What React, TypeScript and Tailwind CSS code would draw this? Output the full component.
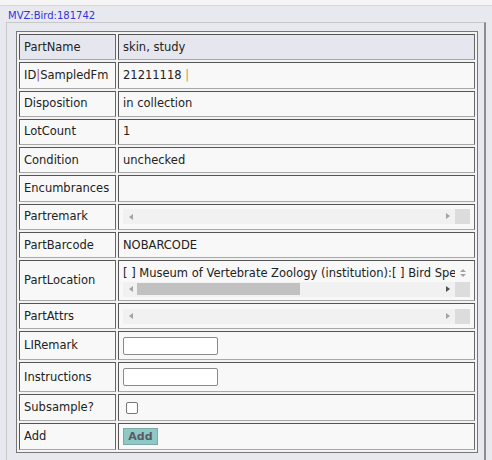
import { ReactNode } from 'react';

// horizontal scrollbar strip with its corner square, as drawn by an empty overflow box
const HScroll = ({ thumb = false }: { thumb?: boolean }) => (
  <div className="flex h-[15px] w-full">
    <div className="relative flex flex-1 items-center bg-[#f1f1f1]">
      <span className="ml-[6px] h-0 w-0 border-y-[3.5px] border-r-[4px] border-y-transparent border-r-[#a3a3a3]" />
      {thumb && <div className="ml-[4px] h-[12px] w-[163px] bg-[#c1c1c1]" />}
      <span
        className={
          'absolute right-[5px] top-[4px] h-0 w-0 border-y-[3.5px] border-l-[4px] border-y-transparent ' +
          (thumb ? 'border-l-[#505050]' : 'border-l-[#a3a3a3]')
        }
      />
    </div>
    <div className="w-[15px] bg-[#dcdcdc]" />
  </div>
);

type Row = { label: ReactNode; value?: ReactNode; h: string; head?: boolean };

const rows: Row[] = [
  { label: 'PartName', value: 'skin, study', h: 'h-[26.3px]', head: true },
  {
    label: (
      <>
        ID<span className="text-[#9a4a90]">|</span>SampledFm
      </>
    ),
    value: (
      <>
        21211118 <span className="text-[#c89a4a]">|</span>
      </>
    ),
    h: 'h-[26.3px]',
  },
  { label: 'Disposition', value: 'in collection', h: 'h-[26.3px]' },
  { label: 'LotCount', value: '1', h: 'h-[26.3px]' },
  { label: 'Condition', value: 'unchecked', h: 'h-[26.3px]' },
  { label: 'Encumbrances', value: '', h: 'h-[26.3px]' },
  { label: 'Partremark', value: <HScroll />, h: 'h-[26.3px]' },
  { label: 'PartBarcode', value: 'NOBARCODE', h: 'h-[26.3px]' },
  {
    label: 'PartLocation',
    value: (
      <div className="flex flex-col">
        <div className="flex h-[17px] items-center">
          <div className="min-w-0 flex-1 overflow-hidden whitespace-nowrap">
            [ ] Museum of Vertebrate Zoology (institution):[ ] Bird Specimens
          </div>
          <div className="flex w-[15px] flex-col items-center gap-[2px]">
            <span className="h-0 w-0 border-x-[3px] border-b-[3px] border-x-transparent border-b-[#a3a3a3]" />
            <span className="h-0 w-0 border-x-[3px] border-t-[3px] border-x-transparent border-t-[#a3a3a3]" />
          </div>
        </div>
        <HScroll thumb />
      </div>
    ),
    h: 'h-[41px]',
  },
  { label: 'PartAttrs', value: <HScroll />, h: 'h-[26px]' },
  {
    label: 'LIRemark',
    value: <input type="text" className="block h-[18px] w-[95px] rounded-[2px] border border-[#8a8a8a] bg-white" />,
    h: 'h-[29px]',
  },
  {
    label: 'Instructions',
    value: <input type="text" className="block h-[18px] w-[95px] rounded-[2px] border border-[#8a8a8a] bg-white" />,
    h: 'h-[30px]',
  },
  {
    label: 'Subsample?',
    value: <span className="ml-[3px] block h-[12px] w-[12px] rounded-[2px] border border-[#777] bg-white" />,
    h: 'h-[27px]',
  },
  {
    label: 'Add',
    value: (
      <button className="block h-[17px] w-[35px] border border-[#7aa9a6] bg-[#8fc9c5] text-[11px] font-bold leading-none text-[#5a5a66]">
        Add
      </button>
    ),
    h: 'h-[27px]',
  },
];

const cell =
  'overflow-hidden border border-t-[#555] border-l-[#555] border-r-[#666] border-b-[#a8a8a8] px-[4px] py-0 align-middle';

export default function App() {
  return (
    <div className="h-[460px] w-[492px] overflow-hidden bg-[#e8e9ef] font-['DejaVu_Sans',sans-serif] text-[11.5px] text-[#222]">
      <div className="h-[6px] border-b border-[#d6d6d6] bg-[#f5f5f5]" />
      <div className="pl-[8px] pt-[4px] text-[10px] leading-[12px] text-[#3333dd]">MVZ:Bird:181742</div>
      <div className="ml-[6px] w-[480px] border border-r-2 border-[#c8c8c8] border-r-[#8c8c8c] pl-[9px] pt-[8px]">
        <table className="w-[462px] table-fixed border-separate border-spacing-[2px] border border-[#777] bg-[#f3f3f3]">
          <colgroup>
            <col className="w-[97px]" />
            <col />
          </colgroup>
          <tbody>
            {rows.map((r, i) => (
              <tr key={i} className={r.h}>
                <td className={`${cell} ${r.head ? 'bg-[#e6e7ee]' : 'bg-[#f8f8f8]'}`}>{r.label}</td>
                <td className={`${cell} ${r.head ? 'bg-[#e6e7ee]' : 'bg-[#f8f8f8]'}`}>{r.value}</td>
              </tr>
            ))}
          </tbody>
        </table>
        <div className="h-[20px]" />
      </div>
    </div>
  );
}
